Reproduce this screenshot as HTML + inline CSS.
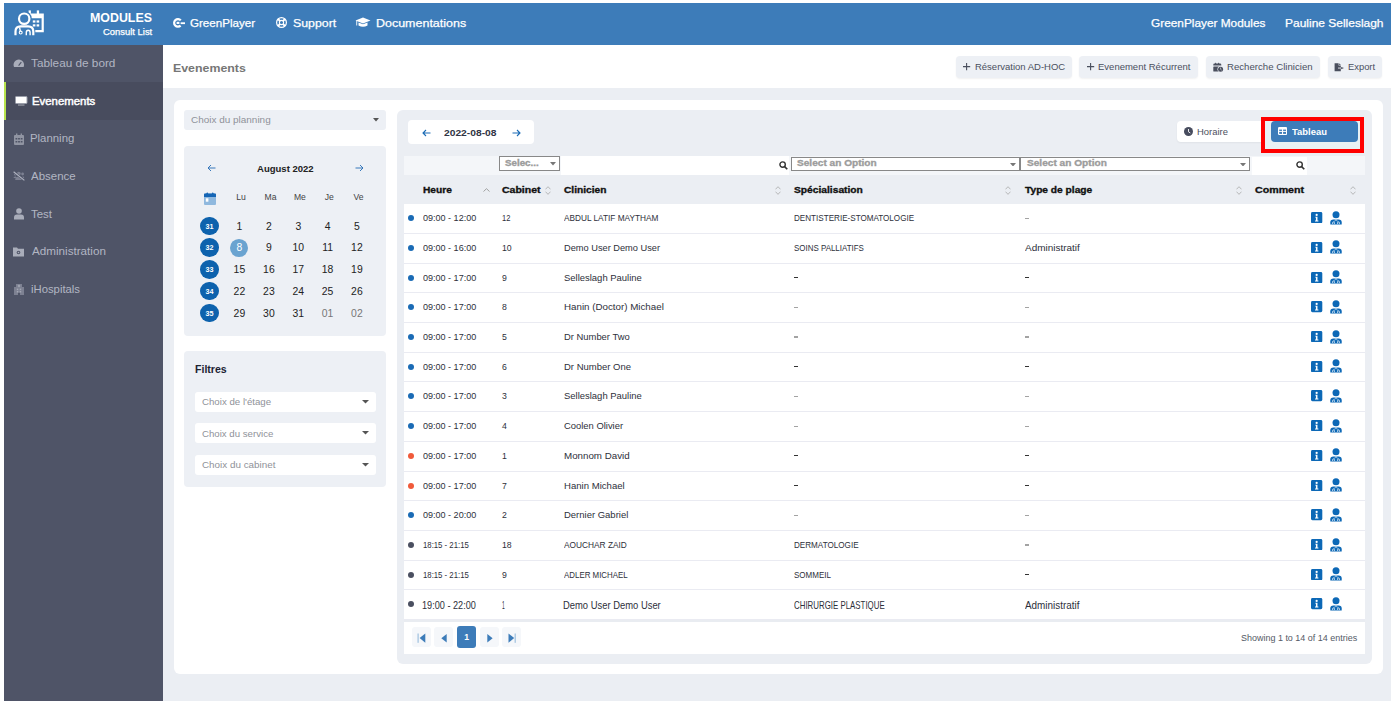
<!DOCTYPE html>
<html><head><meta charset="utf-8">
<style>
*{box-sizing:border-box;margin:0;padding:0}
html,body{width:1395px;height:706px;overflow:hidden;background:#fff;font-family:"Liberation Sans",sans-serif}
.bx{position:absolute}
.tx{position:absolute;white-space:nowrap;line-height:normal;transform-origin:0 0}
.wk{width:18.7px;height:18.7px;border-radius:50%;background:#0d62ad}
</style></head><body>
<div class="bx" style="left:4px;top:3px;width:1387.00px;height:42.00px;background:#3d7cb9;"></div>
<div class="bx" style="left:4px;top:45px;width:159.00px;height:656.00px;background:#4f5467;"></div>
<div class="bx" style="left:163px;top:45px;width:1228.00px;height:43.00px;background:#fff;"></div>
<div class="bx" style="left:163px;top:88px;width:1228.00px;height:613.00px;background:#ebeef3;"></div>
<div class="bx" style="left:174px;top:100px;width:1209.00px;height:574.00px;background:#fff;border-radius:6px;"></div>
<svg class="bx" style="left:0;top:0" width="50" height="45" viewBox="0 0 50 45">
<path d="M29.5 13.6 H43.8 V32.2 H35.3 V29.9 H41.6 V18.2 H29.5 Z" fill="#fff"/>
<rect x="28.6" y="10.4" width="2.3" height="4" fill="#fff"/><rect x="36.8" y="10.4" width="2.3" height="4" fill="#fff"/>
<rect x="32.8" y="20.4" width="2.6" height="2.2" fill="#fff"/><rect x="36.6" y="20.4" width="2.6" height="2.2" fill="#fff"/>
<rect x="32.8" y="24.3" width="2.6" height="2.2" fill="#fff"/><rect x="36.6" y="24.3" width="2.6" height="2.2" fill="#fff"/>
<circle cx="24.2" cy="18.7" r="7.6" fill="#3d7cb9"/>
<circle cx="24.2" cy="18.7" r="5.2" fill="none" stroke="#fff" stroke-width="2.2"/>
<path d="M15.5 35.2 V31.6 Q15.5 26.4 20.7 26.4 H28.1 Q33.3 26.4 33.3 31.6 V35.2" fill="none" stroke="#fff" stroke-width="2.2"/>
<circle cx="20.7" cy="32.6" r="1.45" fill="none" stroke="#fff" stroke-width="1.1"/>
<path d="M20.3 31.1 L19.6 27.3 M26.3 35.2 V32.6 Q26.3 30.2 28.2 30.2 Q30.1 30.2 30.1 32.6 V35.2" fill="none" stroke="#fff" stroke-width="1.4"/>
</svg>
<span id="t0" class="tx" style="left:90.27px;top:10.00px;font-size:13.44px;font-weight:bold;color:#fff;transform:scaleX(0.9212);">MODULES</span>
<span id="t1" class="tx" style="left:103.00px;top:25.70px;font-size:9.45px;font-weight:normal;color:#fff;transform:scaleX(0.9980);-webkit-text-stroke:0.25px currentColor;">Consult List</span>
<svg class="bx" style="left:172px;top:17px" width="14" height="12" viewBox="0 0 14 12">
<path d="M8.8 3.4 A3.8 3.8 0 1 0 8.6 8.6" fill="none" stroke="#fff" stroke-width="2.2"/>
<rect x="4.6" y="4.8" width="2.8" height="2.2" fill="#fff"/><rect x="8.6" y="5.3" width="4.4" height="1.8" fill="#fff"/></svg>
<span id="t2" class="tx" style="left:190.00px;top:16.60px;font-size:11.19px;font-weight:normal;color:#fff;transform:scaleX(1.0349);-webkit-text-stroke:0.25px currentColor;">GreenPlayer</span>
<svg class="bx" style="left:275px;top:16px" width="13" height="13" viewBox="0 0 13 13">
<circle cx="6.5" cy="6.5" r="4.9" fill="none" stroke="#fff" stroke-width="1.2"/>
<circle cx="6.5" cy="6.5" r="2.1" fill="none" stroke="#fff" stroke-width="1.1"/>
<path d="M2.9 2.9 L5 5 M10.1 2.9 L8 5 M2.9 10.1 L5 8 M10.1 10.1 L8 8" stroke="#fff" stroke-width="2"/></svg>
<span id="t3" class="tx" style="left:292.78px;top:16.60px;font-size:11.19px;font-weight:normal;color:#fff;transform:scaleX(1.1026);-webkit-text-stroke:0.25px currentColor;">Support</span>
<svg class="bx" style="left:355px;top:17px" width="16" height="11" viewBox="0 0 16 11">
<path d="M8 0.5 L15.5 3.5 L8 6.5 L0.5 3.5 Z" fill="#fff"/>
<path d="M3.5 5.5 V8.5 Q8 11 12.5 8.5 V5.5 L8 7.3 Z" fill="#fff"/>
<rect x="1.3" y="3.5" width="0.9" height="5" fill="#fff"/></svg>
<span id="t4" class="tx" style="left:375.57px;top:16.60px;font-size:11.19px;font-weight:normal;color:#fff;transform:scaleX(1.1148);-webkit-text-stroke:0.25px currentColor;">Documentations</span>
<span id="t5" class="tx" style="left:1151.00px;top:16.60px;font-size:11.19px;font-weight:normal;color:#fff;transform:scaleX(1.0574);-webkit-text-stroke:0.25px currentColor;">GreenPlayer Modules</span>
<span id="t6" class="tx" style="left:1285.37px;top:16.60px;font-size:11.19px;font-weight:normal;color:#fff;transform:scaleX(1.0703);-webkit-text-stroke:0.25px currentColor;">Pauline Selleslagh</span>
<div class="bx" style="left:4px;top:82px;width:159.00px;height:38.00px;background:#484c5e;"></div>
<div class="bx" style="left:4px;top:82px;width:2.00px;height:38.00px;background:#b7e34c;"></div>
<span id="t7" class="tx" style="left:30.78px;top:57.90px;font-size:10.32px;font-weight:normal;color:#b2b6c3;transform:scaleX(1.1411);">Tableau de bord</span>
<span id="t8" class="tx" style="left:32.17px;top:94.60px;font-size:10.76px;font-weight:normal;color:#fff;transform:scaleX(1.0593);-webkit-text-stroke:0.45px #fff;">Evenements</span>
<span id="t9" class="tx" style="left:30.16px;top:133.30px;font-size:10.47px;font-weight:normal;color:#b2b6c3;transform:scaleX(1.0875);">Planning</span>
<span id="t10" class="tx" style="left:30.58px;top:170.90px;font-size:10.47px;font-weight:normal;color:#b2b6c3;transform:scaleX(1.0950);">Absence</span>
<span id="t11" class="tx" style="left:30.58px;top:208.70px;font-size:10.47px;font-weight:normal;color:#b2b6c3;transform:scaleX(1.0947);">Test</span>
<span id="t12" class="tx" style="left:32.41px;top:246.40px;font-size:10.47px;font-weight:normal;color:#b2b6c3;transform:scaleX(1.1136);">Administration</span>
<span id="t13" class="tx" style="left:30.58px;top:284.10px;font-size:10.47px;font-weight:normal;color:#b2b6c3;transform:scaleX(1.0800);">iHospitals</span>
<svg class="bx" style="left:13px;top:59px" width="12" height="9" viewBox="0 0 12 9">
<path d="M1.05 8 A5.25 5.25 0 1 1 10.55 8 Z" fill="#a9adba"/><path d="M5.6 6.6 L8.3 3.2" stroke="#4f5467" stroke-width="1.1"/></svg>
<svg class="bx" style="left:15px;top:96px" width="13" height="10" viewBox="0 0 13 10">
<rect x="0.5" y="0.5" width="11.5" height="7" rx="0.8" fill="#fff" stroke="#9a9eaa" stroke-width="1"/><rect x="3" y="8.3" width="6.5" height="1.5" fill="#8a8e9a"/></svg>
<svg class="bx" style="left:14px;top:133px" width="10" height="12" viewBox="0 0 10 12">
<rect x="0" y="2" width="10" height="10" rx="1" fill="#9094a2"/><rect x="2" y="0.5" width="1.4" height="2.5" fill="#9094a2"/><rect x="6.6" y="0.5" width="1.4" height="2.5" fill="#9094a2"/>
<g fill="#4f5467"><rect x="1.5" y="5" width="1.8" height="1.5"/><rect x="4.1" y="5" width="1.8" height="1.5"/><rect x="6.7" y="5" width="1.8" height="1.5"/><rect x="1.5" y="8" width="1.8" height="1.5"/><rect x="4.1" y="8" width="1.8" height="1.5"/><rect x="6.7" y="8" width="1.8" height="1.5"/></g></svg>
<svg class="bx" style="left:13px;top:171px" width="12" height="10" viewBox="0 0 12 10">
<circle cx="5.8" cy="2.6" r="1.9" fill="#7d8192"/><circle cx="9.6" cy="3" r="1.4" fill="#7d8192"/><circle cx="2.2" cy="3.2" r="1.2" fill="#7d8192"/>
<path d="M2.2 9 Q2.2 5.6 5.8 5.6 Q9.4 5.6 9.4 9 Z" fill="#7d8192"/><path d="M0.5 7 Q0.5 5.5 2.2 5.5 L3 5.5 L3 7 Z M9.5 5.3 Q11.3 5.3 11.3 7.2 L9.8 7.2 Z" fill="#7d8192"/>
<path d="M0.6 0.8 L11.4 9.4" stroke="#4f5467" stroke-width="2.2"/><path d="M0.6 0.8 L11.4 9.4" stroke="#b0b4c1" stroke-width="1.2"/></svg>
<svg class="bx" style="left:14px;top:208px" width="10" height="12" viewBox="0 0 10 12">
<circle cx="5" cy="3" r="2.8" fill="#a9adba"/><path d="M0 11.5 V9.5 Q0 6.5 3 6.5 H7 Q10 6.5 10 9.5 V11.5 Z" fill="#a9adba"/></svg>
<svg class="bx" style="left:12.5px;top:247px" width="11" height="10" viewBox="0 0 11 10">
<path d="M0 0.5 H4 L5 1.8 H11 V9.5 H0 Z" fill="#a9adba"/><circle cx="5.5" cy="5.5" r="1.8" fill="#4f5467"/><circle cx="5.5" cy="5.5" r="0.8" fill="#a9adba"/></svg>
<svg class="bx" style="left:14px;top:284px" width="10" height="11" viewBox="0 0 10 11">
<rect x="2" y="0" width="6" height="11" fill="#7d8192"/><rect x="0" y="3" width="10" height="8" fill="#7d8192"/>
<g fill="#a3a7b4"><rect x="4.3" y="0.8" width="1.4" height="2.4"/><rect x="3.8" y="1.3" width="2.4" height="1.2"/><rect x="2.8" y="4.6" width="1.5" height="1.5"/><rect x="5.7" y="4.6" width="1.5" height="1.5"/><rect x="2.8" y="7" width="1.5" height="1.5"/><rect x="5.7" y="7" width="1.5" height="1.5"/></g><rect x="4" y="8.8" width="2" height="2.2" fill="#4f5467"/></svg>
<span id="t14" class="tx" style="left:173.32px;top:61.90px;font-size:11.48px;font-weight:bold;color:#767676;transform:scaleX(1.0776);">Evenements</span>
<div class="bx" style="left:956.3px;top:56px;width:115.60px;height:22.00px;background:#edf0f5;border-radius:4px;box-shadow:0 1px 2px rgba(0,0,0,0.06);"></div>
<div class="bx" style="left:1079.4px;top:56px;width:118.80px;height:22.00px;background:#edf0f5;border-radius:4px;box-shadow:0 1px 2px rgba(0,0,0,0.06);"></div>
<div class="bx" style="left:1206.1px;top:56px;width:113.80px;height:22.00px;background:#edf0f5;border-radius:4px;box-shadow:0 1px 2px rgba(0,0,0,0.06);"></div>
<div class="bx" style="left:1327.6px;top:56px;width:54.50px;height:22.00px;background:#edf0f5;border-radius:4px;box-shadow:0 1px 2px rgba(0,0,0,0.06);"></div>
<svg class="bx" style="left:963.4px;top:63px" width="8" height="8" viewBox="0 0 8 8"><path d="M3.6 0 V7.2 M0 3.6 H7.2" stroke="#4a4f5e" stroke-width="1.1"/></svg>
<svg class="bx" style="left:1087px;top:63px" width="8" height="8" viewBox="0 0 8 8"><path d="M3.6 0 V7.2 M0 3.6 H7.2" stroke="#4a4f5e" stroke-width="1.1"/></svg>
<span id="t15" class="tx" style="left:975.20px;top:61.00px;font-size:9.59px;font-weight:normal;color:#4a4f5e;transform:scaleX(0.9900);">Réservation AD-HOC</span>
<span id="t16" class="tx" style="left:1098.39px;top:61.00px;font-size:9.59px;font-weight:normal;color:#4a4f5e;transform:scaleX(0.9925);">Evenement Récurrent</span>
<span id="t17" class="tx" style="left:1227.19px;top:61.20px;font-size:9.59px;font-weight:normal;color:#4a4f5e;transform:scaleX(1.0047);">Recherche Clinicien</span>
<span id="t18" class="tx" style="left:1347.82px;top:61.20px;font-size:9.59px;font-weight:normal;color:#4a4f5e;transform:scaleX(0.9778);">Export</span>
<svg class="bx" style="left:1212.5px;top:61.5px" width="11" height="10" viewBox="0 0 11 10">
<path d="M0.3 3.5 V2.8 Q0.3 1.6 1.5 1.6 H2 L2.6 0.4 L3.3 1.6 H5 L5.6 0.4 L6.3 1.6 H7.1 Q8.3 1.6 8.3 2.8 V3.5 Z" fill="#4a4f5e"/>
<rect x="0.3" y="4.6" width="8" height="4.9" rx="0.5" fill="#4a4f5e"/>
<circle cx="7.6" cy="7.2" r="3.1" fill="#edf0f5"/><circle cx="7.6" cy="7.2" r="2.5" fill="#4a4f5e"/>
<path d="M7.6 5.6 V7.3 L8.7 8.2" stroke="#edf0f5" stroke-width="0.6" fill="none"/></svg>
<svg class="bx" style="left:1334px;top:62.5px" width="11" height="9" viewBox="0 0 11 9">
<path d="M0.6 0.2 H4.6 V2.6 H6.8 V8.3 H0.6 Z" fill="#4a4f5e"/><path d="M5.2 0.2 L6.8 1.9 H5.2 Z" fill="#4a4f5e"/>
<rect x="4" y="4.6" width="2.9" height="0.9" fill="#edf0f5"/><path d="M7.1 3.9 L10 5.05 L7.1 6.2 Z" fill="#4a4f5e"/></svg>
<div class="bx" style="left:184.2px;top:110px;width:201.70px;height:19.50px;background:#edf0f5;border-radius:3px;"></div>
<span id="t19" class="tx" style="left:190.59px;top:114.40px;font-size:9.88px;font-weight:normal;color:#8f9299;transform:scaleX(1.0077);">Choix du planning</span>
<svg class="bx" style="left:373px;top:118px" width="6" height="4" viewBox="0 0 6 4"><path d="M0 0 H6 L3 3.5 Z" fill="#555"/></svg>
<div class="bx" style="left:184px;top:146px;width:202.00px;height:190.00px;background:#edf0f5;border-radius:4px;"></div>
<svg class="bx" style="left:207px;top:164.2px" width="9" height="8" viewBox="0 0 9 8"><path d="M8.5 4 H1 M4 1 L1 4 L4 7" fill="none" stroke="#2f72b7" stroke-width="0.95"/></svg>
<svg class="bx" style="left:354.5px;top:164.2px" width="9" height="8" viewBox="0 0 9 8"><path d="M0.5 4 H8 M5 1 L8 4 L5 7" fill="none" stroke="#2f72b7" stroke-width="0.95"/></svg>
<span id="t20" class="tx" style="left:257.00px;top:163.50px;font-size:9.16px;font-weight:bold;color:#222;transform:scaleX(1.0407);">August 2022</span>
<svg class="bx" style="left:204px;top:192px" width="12" height="13" viewBox="0 0 12 13">
<rect x="0" y="1.4" width="12" height="11.6" rx="1" fill="#8fb8de"/><path d="M0 5 V2.4 Q0 1.4 1 1.4 H2.2 L3.2 0.2 L4.2 1.4 H7.8 L8.8 0.2 L9.8 1.4 H11 Q12 1.4 12 2.4 V5 Z" fill="#1565b5"/>
<rect x="1.8" y="6.3" width="2.6" height="3.4" fill="#fff"/></svg>
<span id="t21" class="tx" style="left:191.00px;width:100px;text-align:center;top:192.20px;font-size:8.60px;font-weight:normal;color:#444;transform:scaleX(1.0000);">Lu</span>
<span id="t22" class="tx" style="left:220.50px;width:100px;text-align:center;top:192.20px;font-size:8.60px;font-weight:normal;color:#444;transform:scaleX(1.0000);">Ma</span>
<span id="t23" class="tx" style="left:249.90px;width:100px;text-align:center;top:192.20px;font-size:8.60px;font-weight:normal;color:#444;transform:scaleX(1.0000);">Me</span>
<span id="t24" class="tx" style="left:279.20px;width:100px;text-align:center;top:192.20px;font-size:8.60px;font-weight:normal;color:#444;transform:scaleX(1.0000);">Je</span>
<span id="t25" class="tx" style="left:308.50px;width:100px;text-align:center;top:192.20px;font-size:8.60px;font-weight:normal;color:#444;transform:scaleX(1.0000);">Ve</span>
<div class="bx wk" style="left:200.15px;top:216.55px"></div>
<span id="t26" class="tx" style="left:159.50px;width:100px;text-align:center;top:221.50px;font-size:7.20px;font-weight:bold;color:#fff;transform:scaleX(1.0000);">31</span>
<span id="t27" class="tx" style="left:189.40px;width:100px;text-align:center;top:220.50px;font-size:10.40px;font-weight:normal;color:#222;transform:scaleX(1.0000);">1</span>
<span id="t28" class="tx" style="left:218.90px;width:100px;text-align:center;top:220.50px;font-size:10.40px;font-weight:normal;color:#222;transform:scaleX(1.0000);">2</span>
<span id="t29" class="tx" style="left:248.30px;width:100px;text-align:center;top:220.50px;font-size:10.40px;font-weight:normal;color:#222;transform:scaleX(1.0000);">3</span>
<span id="t30" class="tx" style="left:277.60px;width:100px;text-align:center;top:220.50px;font-size:10.40px;font-weight:normal;color:#222;transform:scaleX(1.0000);">4</span>
<span id="t31" class="tx" style="left:306.90px;width:100px;text-align:center;top:220.50px;font-size:10.40px;font-weight:normal;color:#222;transform:scaleX(1.0000);">5</span>
<div class="bx wk" style="left:200.15px;top:238.30px"></div>
<span id="t32" class="tx" style="left:159.50px;width:100px;text-align:center;top:243.25px;font-size:7.20px;font-weight:bold;color:#fff;transform:scaleX(1.0000);">32</span>
<div class="bx" style="left:230.10px;top:238.75px;width:17.8px;height:17.8px;border-radius:50%;background:#6aa3d0"></div>
<span id="t33" class="tx" style="left:189.40px;width:100px;text-align:center;top:242.25px;font-size:10.40px;font-weight:normal;color:#fff;transform:scaleX(1.0000);">8</span>
<span id="t34" class="tx" style="left:218.90px;width:100px;text-align:center;top:242.25px;font-size:10.40px;font-weight:normal;color:#222;transform:scaleX(1.0000);">9</span>
<span id="t35" class="tx" style="left:248.30px;width:100px;text-align:center;top:242.25px;font-size:10.40px;font-weight:normal;color:#222;transform:scaleX(1.0000);">10</span>
<span id="t36" class="tx" style="left:277.60px;width:100px;text-align:center;top:242.25px;font-size:10.40px;font-weight:normal;color:#222;transform:scaleX(1.0000);">11</span>
<span id="t37" class="tx" style="left:306.90px;width:100px;text-align:center;top:242.25px;font-size:10.40px;font-weight:normal;color:#222;transform:scaleX(1.0000);">12</span>
<div class="bx wk" style="left:200.15px;top:260.05px"></div>
<span id="t38" class="tx" style="left:159.50px;width:100px;text-align:center;top:265.00px;font-size:7.20px;font-weight:bold;color:#fff;transform:scaleX(1.0000);">33</span>
<span id="t39" class="tx" style="left:189.40px;width:100px;text-align:center;top:264.00px;font-size:10.40px;font-weight:normal;color:#222;transform:scaleX(1.0000);">15</span>
<span id="t40" class="tx" style="left:218.90px;width:100px;text-align:center;top:264.00px;font-size:10.40px;font-weight:normal;color:#222;transform:scaleX(1.0000);">16</span>
<span id="t41" class="tx" style="left:248.30px;width:100px;text-align:center;top:264.00px;font-size:10.40px;font-weight:normal;color:#222;transform:scaleX(1.0000);">17</span>
<span id="t42" class="tx" style="left:277.60px;width:100px;text-align:center;top:264.00px;font-size:10.40px;font-weight:normal;color:#222;transform:scaleX(1.0000);">18</span>
<span id="t43" class="tx" style="left:306.90px;width:100px;text-align:center;top:264.00px;font-size:10.40px;font-weight:normal;color:#222;transform:scaleX(1.0000);">19</span>
<div class="bx wk" style="left:200.15px;top:281.80px"></div>
<span id="t44" class="tx" style="left:159.50px;width:100px;text-align:center;top:286.75px;font-size:7.20px;font-weight:bold;color:#fff;transform:scaleX(1.0000);">34</span>
<span id="t45" class="tx" style="left:189.40px;width:100px;text-align:center;top:285.75px;font-size:10.40px;font-weight:normal;color:#222;transform:scaleX(1.0000);">22</span>
<span id="t46" class="tx" style="left:218.90px;width:100px;text-align:center;top:285.75px;font-size:10.40px;font-weight:normal;color:#222;transform:scaleX(1.0000);">23</span>
<span id="t47" class="tx" style="left:248.30px;width:100px;text-align:center;top:285.75px;font-size:10.40px;font-weight:normal;color:#222;transform:scaleX(1.0000);">24</span>
<span id="t48" class="tx" style="left:277.60px;width:100px;text-align:center;top:285.75px;font-size:10.40px;font-weight:normal;color:#222;transform:scaleX(1.0000);">25</span>
<span id="t49" class="tx" style="left:306.90px;width:100px;text-align:center;top:285.75px;font-size:10.40px;font-weight:normal;color:#222;transform:scaleX(1.0000);">26</span>
<div class="bx wk" style="left:200.15px;top:303.55px"></div>
<span id="t50" class="tx" style="left:159.50px;width:100px;text-align:center;top:308.50px;font-size:7.20px;font-weight:bold;color:#fff;transform:scaleX(1.0000);">35</span>
<span id="t51" class="tx" style="left:189.40px;width:100px;text-align:center;top:307.50px;font-size:10.40px;font-weight:normal;color:#222;transform:scaleX(1.0000);">29</span>
<span id="t52" class="tx" style="left:218.90px;width:100px;text-align:center;top:307.50px;font-size:10.40px;font-weight:normal;color:#222;transform:scaleX(1.0000);">30</span>
<span id="t53" class="tx" style="left:248.30px;width:100px;text-align:center;top:307.50px;font-size:10.40px;font-weight:normal;color:#222;transform:scaleX(1.0000);">31</span>
<span id="t54" class="tx" style="left:277.60px;width:100px;text-align:center;top:307.50px;font-size:10.40px;font-weight:normal;color:#777;transform:scaleX(1.0000);">01</span>
<span id="t55" class="tx" style="left:306.90px;width:100px;text-align:center;top:307.50px;font-size:10.40px;font-weight:normal;color:#777;transform:scaleX(1.0000);">02</span>
<div class="bx" style="left:184px;top:351px;width:202.30px;height:135.50px;background:#edf0f5;border-radius:4px;"></div>
<span id="t56" class="tx" style="left:195.00px;top:362.90px;font-size:11.05px;font-weight:bold;color:#1c2333;transform:scaleX(0.9576);">Filtres</span>
<div class="bx" style="left:195px;top:391.6px;width:181.00px;height:20.00px;background:#fff;border-radius:3px;"></div>
<span id="t57" class="tx" style="left:201.99px;top:395.90px;font-size:9.45px;font-weight:normal;color:#8f9299;transform:scaleX(1.0254);">Choix de l'étage</span>
<svg class="bx" style="left:362px;top:399.60px" width="7" height="4" viewBox="0 0 7 4"><path d="M0 0 H7 L3.5 3.6 Z" fill="#555"/></svg>
<div class="bx" style="left:195px;top:423.20000000000005px;width:181.00px;height:20.00px;background:#fff;border-radius:3px;"></div>
<span id="t58" class="tx" style="left:201.99px;top:427.50px;font-size:9.45px;font-weight:normal;color:#8f9299;transform:scaleX(1.0232);">Choix du service</span>
<svg class="bx" style="left:362px;top:431.20px" width="7" height="4" viewBox="0 0 7 4"><path d="M0 0 H7 L3.5 3.6 Z" fill="#555"/></svg>
<div class="bx" style="left:195px;top:454.8px;width:181.00px;height:20.00px;background:#fff;border-radius:3px;"></div>
<span id="t59" class="tx" style="left:201.98px;top:459.10px;font-size:9.45px;font-weight:normal;color:#8f9299;transform:scaleX(1.0443);">Choix du cabinet</span>
<svg class="bx" style="left:362px;top:462.80px" width="7" height="4" viewBox="0 0 7 4"><path d="M0 0 H7 L3.5 3.6 Z" fill="#555"/></svg>
<div class="bx" style="left:397px;top:110px;width:974.90px;height:553.50px;background:#ebeef3;border-radius:6px;"></div>
<div class="bx" style="left:408px;top:119.8px;width:125.70px;height:24.30px;background:#fff;border-radius:4px;"></div>
<svg class="bx" style="left:421.5px;top:128.5px" width="9" height="8" viewBox="0 0 9 8"><path d="M8.5 4 H1 M4 1 L1 4 L4 7" fill="none" stroke="#1a6bb5" stroke-width="1.1"/></svg>
<svg class="bx" style="left:511.8px;top:128.5px" width="9" height="8" viewBox="0 0 9 8"><path d="M0.5 4 H8 M5 1 L8 4 L5 7" fill="none" stroke="#1a6bb5" stroke-width="1.1"/></svg>
<span id="t60" class="tx" style="left:444.16px;top:127.10px;font-size:9.45px;font-weight:bold;color:#2f3444;transform:scaleX(1.0875);">2022-08-08</span>
<div class="bx" style="left:1177.2px;top:120.9px;width:112.80px;height:21.50px;background:#fff;border-radius:4px;box-shadow:0 1px 2px rgba(0,0,0,0.05);"></div>
<svg class="bx" style="left:1184px;top:127px" width="9" height="9" viewBox="0 0 9 9"><circle cx="4.5" cy="4.5" r="4.5" fill="#474c5e"/><path d="M4.5 2 V4.8 L6.3 6" fill="none" stroke="#fff" stroke-width="0.9"/></svg>
<span id="t61" class="tx" style="left:1197.37px;top:126.70px;font-size:9.01px;font-weight:normal;color:#4d5160;transform:scaleX(1.0483);">Horaire</span>
<div class="bx" style="left:1261px;top:117px;width:103.30px;height:35.90px;background:#e9f1f4;"></div>
<div class="bx" style="left:1271.1px;top:120.9px;width:86.70px;height:21.50px;background:#3d7cb9;border-radius:4px;"></div>
<svg class="bx" style="left:1277.9px;top:127px" width="9.2" height="8" viewBox="0 0 9.2 8"><rect x="0" y="0" width="9.2" height="8" rx="1.2" fill="#fff"/><g fill="#3d7cb9"><rect x="1.2" y="2.6" width="2.8" height="1.3"/><rect x="5.1" y="2.6" width="2.9" height="1.3"/><rect x="1.2" y="4.9" width="2.8" height="2"/><rect x="5.1" y="4.9" width="2.9" height="2"/></g></svg>
<span id="t62" class="tx" style="left:1292.18px;top:125.70px;font-size:9.59px;font-weight:bold;color:#fff;transform:scaleX(0.9833);">Tableau</span>
<div class="bx" style="left:1261px;top:117px;width:103.3px;height:35.9px;border:4px solid #ff0000;box-sizing:border-box"></div>
<div class="bx" style="left:404.3px;top:156px;width:960.40px;height:19.00px;background:#f4f6f9;"></div>
<div class="bx" style="left:561px;top:156px;width:228.00px;height:19.00px;background:#fff;"></div>
<div class="bx" style="left:1252.4px;top:156.5px;width:54.20px;height:18.00px;background:#fff;"></div>
<div class="bx" style="left:499.1px;top:156.1px;width:60.8px;height:14.5px;border:1px solid #888;background:#fff"></div>
<span id="t63" class="tx" style="left:504.57px;top:158.10px;font-size:8.58px;font-weight:bold;color:#9c9c9c;transform:scaleX(1.1379);-webkit-text-stroke:0.35px currentColor;">Selec...</span>
<svg class="bx" style="left:549.5px;top:162px" width="6" height="3.5" viewBox="0 0 6 3.5"><path d="M0 0 H6 L3 3.5 Z" fill="#777"/></svg>
<div class="bx" style="left:790.5px;top:156.5px;width:229.70px;height:14.4px;border:1px solid #888;background:#fff"></div>
<span id="t64" class="tx" style="left:797.00px;top:156.80px;font-size:9.59px;font-weight:bold;color:#9c9c9c;transform:scaleX(1.0547);-webkit-text-stroke:0.35px currentColor;">Select an Option</span>
<svg class="bx" style="left:1009.70px;top:162.5px" width="6" height="3.5" viewBox="0 0 6 3.5"><path d="M0 0 H6 L3 3.5 Z" fill="#777"/></svg>
<div class="bx" style="left:1020.2px;top:156.5px;width:230.20px;height:14.4px;border:1px solid #888;background:#fff"></div>
<span id="t65" class="tx" style="left:1026.76px;top:156.80px;font-size:9.59px;font-weight:bold;color:#9c9c9c;transform:scaleX(1.0560);-webkit-text-stroke:0.35px currentColor;">Select an Option</span>
<svg class="bx" style="left:1239.90px;top:162.5px" width="6" height="3.5" viewBox="0 0 6 3.5"><path d="M0 0 H6 L3 3.5 Z" fill="#777"/></svg>
<svg class="bx" style="left:778.5px;top:161.3px" width="9" height="9" viewBox="0 0 9 9"><circle cx="3.6" cy="3.6" r="2.7" fill="none" stroke="#333" stroke-width="1.4"/><path d="M5.6 5.6 L8.3 8.3" stroke="#333" stroke-width="1.6"/></svg>
<svg class="bx" style="left:1295.5px;top:161.3px" width="9" height="9" viewBox="0 0 9 9"><circle cx="3.6" cy="3.6" r="2.7" fill="none" stroke="#333" stroke-width="1.4"/><path d="M5.6 5.6 L8.3 8.3" stroke="#333" stroke-width="1.6"/></svg>
<span id="t66" class="tx" style="left:423.20px;top:183.60px;font-size:9.88px;font-weight:bold;color:#111;transform:scaleX(1.0321);-webkit-text-stroke:0.35px currentColor;">Heure</span>
<span id="t67" class="tx" style="left:502.00px;top:183.50px;font-size:9.45px;font-weight:bold;color:#111;transform:scaleX(1.1143);-webkit-text-stroke:0.35px currentColor;">Cabinet</span>
<span id="t68" class="tx" style="left:564.00px;top:183.50px;font-size:9.45px;font-weight:bold;color:#111;transform:scaleX(1.0795);-webkit-text-stroke:0.35px currentColor;">Clinicien</span>
<span id="t69" class="tx" style="left:793.77px;top:183.60px;font-size:9.88px;font-weight:bold;color:#111;transform:scaleX(1.0364);-webkit-text-stroke:0.35px currentColor;">Spécialisation</span>
<span id="t70" class="tx" style="left:1024.59px;top:183.60px;font-size:9.88px;font-weight:bold;color:#111;transform:scaleX(1.0323);-webkit-text-stroke:0.35px currentColor;">Type de plage</span>
<span id="t71" class="tx" style="left:1254.96px;top:183.60px;font-size:9.88px;font-weight:bold;color:#111;transform:scaleX(1.0778);-webkit-text-stroke:0.35px currentColor;">Comment</span>
<svg class="bx" style="left:482.5px;top:187.5px" width="7" height="4" viewBox="0 0 7 4"><path d="M0.5 3.5 L3.5 0.7 L6.5 3.5" fill="none" stroke="#999" stroke-width="0.9"/></svg>
<svg class="bx" style="left:544.8px;top:185.5px" width="6" height="9" viewBox="0 0 6 9"><path d="M0.5 3.3 L3 0.7 L5.5 3.3 M0.5 5.7 L3 8.3 L5.5 5.7" fill="none" stroke="#aaa" stroke-width="0.8"/></svg>
<svg class="bx" style="left:774.6px;top:185.5px" width="6" height="9" viewBox="0 0 6 9"><path d="M0.5 3.3 L3 0.7 L5.5 3.3 M0.5 5.7 L3 8.3 L5.5 5.7" fill="none" stroke="#aaa" stroke-width="0.8"/></svg>
<svg class="bx" style="left:1004.7px;top:185.5px" width="6" height="9" viewBox="0 0 6 9"><path d="M0.5 3.3 L3 0.7 L5.5 3.3 M0.5 5.7 L3 8.3 L5.5 5.7" fill="none" stroke="#aaa" stroke-width="0.8"/></svg>
<svg class="bx" style="left:1235.6px;top:185.5px" width="6" height="9" viewBox="0 0 6 9"><path d="M0.5 3.3 L3 0.7 L5.5 3.3 M0.5 5.7 L3 8.3 L5.5 5.7" fill="none" stroke="#aaa" stroke-width="0.8"/></svg>
<svg class="bx" style="left:1350px;top:185.5px" width="6" height="9" viewBox="0 0 6 9"><path d="M0.5 3.3 L3 0.7 L5.5 3.3 M0.5 5.7 L3 8.3 L5.5 5.7" fill="none" stroke="#aaa" stroke-width="0.8"/></svg>
<div class="bx" style="left:404.3px;top:204.2px;width:960.40px;height:29.71px;background:#fff;border-bottom:1px solid #eaebf2;box-sizing:border-box;"></div>
<div class="bx" style="left:408px;top:215.20px;width:6px;height:6px;border-radius:50%;background:#1a6bb5"></div>
<span id="t72" class="tx" style="left:423.20px;top:213.20px;font-size:8.70px;font-weight:normal;color:#2d2f3a;transform:scaleX(1.0392);">09:00 - 12:00</span>
<span id="t73" class="tx" style="left:502.00px;top:213.20px;font-size:8.70px;font-weight:normal;color:#2d2f3a;transform:scaleX(0.8667);">12</span>
<span id="t74" class="tx" style="left:564.19px;top:213.20px;font-size:8.70px;font-weight:normal;color:#2d2f3a;transform:scaleX(0.9505);">ABDUL LATIF MAYTHAM</span>
<span id="t75" class="tx" style="left:794.03px;top:213.20px;font-size:8.70px;font-weight:normal;color:#2d2f3a;transform:scaleX(0.9320);">DENTISTERIE-STOMATOLOGIE</span>
<div class="bx" style="left:1024.6px;top:217.6px;width:4.00px;height:1.20px;background:#a3a3a3;"></div>
<svg class="bx" style="left:1311.4px;top:212.20px" width="11.3" height="11.3" viewBox="0 0 11 11"><rect x="0" y="0" width="11" height="11" rx="1.4" fill="#0c68b6"/><circle cx="5.5" cy="2.9" r="1.1" fill="#fff"/><path d="M4.3 4.6 H6.3 V8.3 H7.2 V9.3 H3.9 V8.3 H4.8 V5.5 H4.3 Z" fill="#fff"/></svg>
<svg class="bx" style="left:1329.5px;top:210.70px" width="12" height="14" viewBox="0 0 12 14"><circle cx="6" cy="3.8" r="3.5" fill="#0c68b6"/><path d="M0.3 13.6 V11.2 Q0.3 8.4 3.4 8.4 H8.6 Q11.7 8.4 11.7 11.2 V13.6 Z" fill="#0c68b6"/><path d="M6 8.4 L4.5 10.6 M6 8.4 L7.5 10.6" stroke="#fff" stroke-width="0.6" fill="none"/><path d="M2.6 13 V12 Q2.6 10.8 3.5 10.8 Q4.4 10.8 4.4 12 V13 M7.6 13 V12 Q7.6 10.8 8.5 10.8 Q9.4 10.8 9.4 12 V13" fill="none" stroke="#fff" stroke-width="0.7"/></svg>
<div class="bx" style="left:404.3px;top:233.91px;width:960.40px;height:29.71px;background:#fff;border-bottom:1px solid #eaebf2;box-sizing:border-box;"></div>
<div class="bx" style="left:408px;top:244.91px;width:6px;height:6px;border-radius:50%;background:#1a6bb5"></div>
<span id="t76" class="tx" style="left:423.20px;top:242.91px;font-size:8.70px;font-weight:normal;color:#2d2f3a;transform:scaleX(1.0392);">09:00 - 16:00</span>
<span id="t77" class="tx" style="left:502.00px;top:242.91px;font-size:8.70px;font-weight:normal;color:#2d2f3a;transform:scaleX(1.0000);">10</span>
<span id="t78" class="tx" style="left:564.20px;top:242.91px;font-size:8.70px;font-weight:normal;color:#2d2f3a;transform:scaleX(1.0637);">Demo User Demo User</span>
<span id="t79" class="tx" style="left:794.04px;top:242.91px;font-size:8.70px;font-weight:normal;color:#2d2f3a;transform:scaleX(0.9145);">SOINS PALLIATIFS</span>
<span id="t80" class="tx" style="left:1024.57px;top:242.91px;font-size:8.70px;font-weight:normal;color:#2d2f3a;transform:scaleX(1.1458);">Administratif</span>
<svg class="bx" style="left:1311.4px;top:241.91px" width="11.3" height="11.3" viewBox="0 0 11 11"><rect x="0" y="0" width="11" height="11" rx="1.4" fill="#0c68b6"/><circle cx="5.5" cy="2.9" r="1.1" fill="#fff"/><path d="M4.3 4.6 H6.3 V8.3 H7.2 V9.3 H3.9 V8.3 H4.8 V5.5 H4.3 Z" fill="#fff"/></svg>
<svg class="bx" style="left:1329.5px;top:240.41px" width="12" height="14" viewBox="0 0 12 14"><circle cx="6" cy="3.8" r="3.5" fill="#0c68b6"/><path d="M0.3 13.6 V11.2 Q0.3 8.4 3.4 8.4 H8.6 Q11.7 8.4 11.7 11.2 V13.6 Z" fill="#0c68b6"/><path d="M6 8.4 L4.5 10.6 M6 8.4 L7.5 10.6" stroke="#fff" stroke-width="0.6" fill="none"/><path d="M2.6 13 V12 Q2.6 10.8 3.5 10.8 Q4.4 10.8 4.4 12 V13 M7.6 13 V12 Q7.6 10.8 8.5 10.8 Q9.4 10.8 9.4 12 V13" fill="none" stroke="#fff" stroke-width="0.7"/></svg>
<div class="bx" style="left:404.3px;top:263.62px;width:960.40px;height:29.71px;background:#fff;border-bottom:1px solid #eaebf2;box-sizing:border-box;"></div>
<div class="bx" style="left:408px;top:274.62px;width:6px;height:6px;border-radius:50%;background:#1a6bb5"></div>
<span id="t81" class="tx" style="left:423.20px;top:272.62px;font-size:8.70px;font-weight:normal;color:#2d2f3a;transform:scaleX(1.0392);">09:00 - 17:00</span>
<span id="t82" class="tx" style="left:502.00px;top:272.62px;font-size:8.70px;font-weight:normal;color:#2d2f3a;transform:scaleX(1.0000);">9</span>
<span id="t83" class="tx" style="left:564.20px;top:272.62px;font-size:8.70px;font-weight:normal;color:#2d2f3a;transform:scaleX(1.0887);">Selleslagh Pauline</span>
<div class="bx" style="left:794.3px;top:277.02px;width:4.00px;height:1.20px;background:#333;"></div>
<div class="bx" style="left:1024.6px;top:277.02px;width:4.00px;height:1.20px;background:#333;"></div>
<svg class="bx" style="left:1311.4px;top:271.62px" width="11.3" height="11.3" viewBox="0 0 11 11"><rect x="0" y="0" width="11" height="11" rx="1.4" fill="#0c68b6"/><circle cx="5.5" cy="2.9" r="1.1" fill="#fff"/><path d="M4.3 4.6 H6.3 V8.3 H7.2 V9.3 H3.9 V8.3 H4.8 V5.5 H4.3 Z" fill="#fff"/></svg>
<svg class="bx" style="left:1329.5px;top:270.12px" width="12" height="14" viewBox="0 0 12 14"><circle cx="6" cy="3.8" r="3.5" fill="#0c68b6"/><path d="M0.3 13.6 V11.2 Q0.3 8.4 3.4 8.4 H8.6 Q11.7 8.4 11.7 11.2 V13.6 Z" fill="#0c68b6"/><path d="M6 8.4 L4.5 10.6 M6 8.4 L7.5 10.6" stroke="#fff" stroke-width="0.6" fill="none"/><path d="M2.6 13 V12 Q2.6 10.8 3.5 10.8 Q4.4 10.8 4.4 12 V13 M7.6 13 V12 Q7.6 10.8 8.5 10.8 Q9.4 10.8 9.4 12 V13" fill="none" stroke="#fff" stroke-width="0.7"/></svg>
<div class="bx" style="left:404.3px;top:293.33px;width:960.40px;height:29.71px;background:#fff;border-bottom:1px solid #eaebf2;box-sizing:border-box;"></div>
<div class="bx" style="left:408px;top:304.33px;width:6px;height:6px;border-radius:50%;background:#1a6bb5"></div>
<span id="t84" class="tx" style="left:423.20px;top:302.33px;font-size:8.70px;font-weight:normal;color:#2d2f3a;transform:scaleX(1.0392);">09:00 - 17:00</span>
<span id="t85" class="tx" style="left:502.00px;top:302.33px;font-size:8.70px;font-weight:normal;color:#2d2f3a;transform:scaleX(1.0000);">8</span>
<span id="t86" class="tx" style="left:564.21px;top:302.33px;font-size:8.70px;font-weight:normal;color:#2d2f3a;transform:scaleX(1.1236);">Hanin (Doctor) Michael</span>
<div class="bx" style="left:794.3px;top:306.72999999999996px;width:4.00px;height:1.20px;background:#a3a3a3;"></div>
<div class="bx" style="left:1024.6px;top:306.72999999999996px;width:4.00px;height:1.20px;background:#a3a3a3;"></div>
<svg class="bx" style="left:1311.4px;top:301.33px" width="11.3" height="11.3" viewBox="0 0 11 11"><rect x="0" y="0" width="11" height="11" rx="1.4" fill="#0c68b6"/><circle cx="5.5" cy="2.9" r="1.1" fill="#fff"/><path d="M4.3 4.6 H6.3 V8.3 H7.2 V9.3 H3.9 V8.3 H4.8 V5.5 H4.3 Z" fill="#fff"/></svg>
<svg class="bx" style="left:1329.5px;top:299.83px" width="12" height="14" viewBox="0 0 12 14"><circle cx="6" cy="3.8" r="3.5" fill="#0c68b6"/><path d="M0.3 13.6 V11.2 Q0.3 8.4 3.4 8.4 H8.6 Q11.7 8.4 11.7 11.2 V13.6 Z" fill="#0c68b6"/><path d="M6 8.4 L4.5 10.6 M6 8.4 L7.5 10.6" stroke="#fff" stroke-width="0.6" fill="none"/><path d="M2.6 13 V12 Q2.6 10.8 3.5 10.8 Q4.4 10.8 4.4 12 V13 M7.6 13 V12 Q7.6 10.8 8.5 10.8 Q9.4 10.8 9.4 12 V13" fill="none" stroke="#fff" stroke-width="0.7"/></svg>
<div class="bx" style="left:404.3px;top:323.03999999999996px;width:960.40px;height:29.71px;background:#fff;border-bottom:1px solid #eaebf2;box-sizing:border-box;"></div>
<div class="bx" style="left:408px;top:334.04px;width:6px;height:6px;border-radius:50%;background:#1a6bb5"></div>
<span id="t87" class="tx" style="left:423.20px;top:332.04px;font-size:8.70px;font-weight:normal;color:#2d2f3a;transform:scaleX(1.0392);">09:00 - 17:00</span>
<span id="t88" class="tx" style="left:502.00px;top:332.04px;font-size:8.70px;font-weight:normal;color:#2d2f3a;transform:scaleX(1.0000);">5</span>
<span id="t89" class="tx" style="left:564.20px;top:332.04px;font-size:8.70px;font-weight:normal;color:#2d2f3a;transform:scaleX(1.0820);">Dr Number Two</span>
<div class="bx" style="left:794.3px;top:336.43999999999994px;width:4.00px;height:1.20px;background:#a3a3a3;"></div>
<div class="bx" style="left:1024.6px;top:336.43999999999994px;width:4.00px;height:1.20px;background:#a3a3a3;"></div>
<svg class="bx" style="left:1311.4px;top:331.04px" width="11.3" height="11.3" viewBox="0 0 11 11"><rect x="0" y="0" width="11" height="11" rx="1.4" fill="#0c68b6"/><circle cx="5.5" cy="2.9" r="1.1" fill="#fff"/><path d="M4.3 4.6 H6.3 V8.3 H7.2 V9.3 H3.9 V8.3 H4.8 V5.5 H4.3 Z" fill="#fff"/></svg>
<svg class="bx" style="left:1329.5px;top:329.54px" width="12" height="14" viewBox="0 0 12 14"><circle cx="6" cy="3.8" r="3.5" fill="#0c68b6"/><path d="M0.3 13.6 V11.2 Q0.3 8.4 3.4 8.4 H8.6 Q11.7 8.4 11.7 11.2 V13.6 Z" fill="#0c68b6"/><path d="M6 8.4 L4.5 10.6 M6 8.4 L7.5 10.6" stroke="#fff" stroke-width="0.6" fill="none"/><path d="M2.6 13 V12 Q2.6 10.8 3.5 10.8 Q4.4 10.8 4.4 12 V13 M7.6 13 V12 Q7.6 10.8 8.5 10.8 Q9.4 10.8 9.4 12 V13" fill="none" stroke="#fff" stroke-width="0.7"/></svg>
<div class="bx" style="left:404.3px;top:352.75px;width:960.40px;height:29.71px;background:#fff;border-bottom:1px solid #eaebf2;box-sizing:border-box;"></div>
<div class="bx" style="left:408px;top:363.75px;width:6px;height:6px;border-radius:50%;background:#1a6bb5"></div>
<span id="t90" class="tx" style="left:423.20px;top:361.75px;font-size:8.70px;font-weight:normal;color:#2d2f3a;transform:scaleX(1.0392);">09:00 - 17:00</span>
<span id="t91" class="tx" style="left:502.00px;top:361.75px;font-size:8.70px;font-weight:normal;color:#2d2f3a;transform:scaleX(1.0000);">6</span>
<span id="t92" class="tx" style="left:564.20px;top:361.75px;font-size:8.70px;font-weight:normal;color:#2d2f3a;transform:scaleX(1.0918);">Dr Number One</span>
<div class="bx" style="left:794.3px;top:366.15px;width:4.00px;height:1.20px;background:#333;"></div>
<div class="bx" style="left:1024.6px;top:366.15px;width:4.00px;height:1.20px;background:#333;"></div>
<svg class="bx" style="left:1311.4px;top:360.75px" width="11.3" height="11.3" viewBox="0 0 11 11"><rect x="0" y="0" width="11" height="11" rx="1.4" fill="#0c68b6"/><circle cx="5.5" cy="2.9" r="1.1" fill="#fff"/><path d="M4.3 4.6 H6.3 V8.3 H7.2 V9.3 H3.9 V8.3 H4.8 V5.5 H4.3 Z" fill="#fff"/></svg>
<svg class="bx" style="left:1329.5px;top:359.25px" width="12" height="14" viewBox="0 0 12 14"><circle cx="6" cy="3.8" r="3.5" fill="#0c68b6"/><path d="M0.3 13.6 V11.2 Q0.3 8.4 3.4 8.4 H8.6 Q11.7 8.4 11.7 11.2 V13.6 Z" fill="#0c68b6"/><path d="M6 8.4 L4.5 10.6 M6 8.4 L7.5 10.6" stroke="#fff" stroke-width="0.6" fill="none"/><path d="M2.6 13 V12 Q2.6 10.8 3.5 10.8 Q4.4 10.8 4.4 12 V13 M7.6 13 V12 Q7.6 10.8 8.5 10.8 Q9.4 10.8 9.4 12 V13" fill="none" stroke="#fff" stroke-width="0.7"/></svg>
<div class="bx" style="left:404.3px;top:382.46px;width:960.40px;height:29.71px;background:#fff;border-bottom:1px solid #eaebf2;box-sizing:border-box;"></div>
<div class="bx" style="left:408px;top:393.46px;width:6px;height:6px;border-radius:50%;background:#1a6bb5"></div>
<span id="t93" class="tx" style="left:423.20px;top:391.46px;font-size:8.70px;font-weight:normal;color:#2d2f3a;transform:scaleX(1.0392);">09:00 - 17:00</span>
<span id="t94" class="tx" style="left:502.00px;top:391.46px;font-size:8.70px;font-weight:normal;color:#2d2f3a;transform:scaleX(1.0000);">3</span>
<span id="t95" class="tx" style="left:564.20px;top:391.46px;font-size:8.70px;font-weight:normal;color:#2d2f3a;transform:scaleX(1.0887);">Selleslagh Pauline</span>
<div class="bx" style="left:794.3px;top:395.85999999999996px;width:4.00px;height:1.20px;background:#a3a3a3;"></div>
<div class="bx" style="left:1024.6px;top:395.85999999999996px;width:4.00px;height:1.20px;background:#a3a3a3;"></div>
<svg class="bx" style="left:1311.4px;top:390.46px" width="11.3" height="11.3" viewBox="0 0 11 11"><rect x="0" y="0" width="11" height="11" rx="1.4" fill="#0c68b6"/><circle cx="5.5" cy="2.9" r="1.1" fill="#fff"/><path d="M4.3 4.6 H6.3 V8.3 H7.2 V9.3 H3.9 V8.3 H4.8 V5.5 H4.3 Z" fill="#fff"/></svg>
<svg class="bx" style="left:1329.5px;top:388.96px" width="12" height="14" viewBox="0 0 12 14"><circle cx="6" cy="3.8" r="3.5" fill="#0c68b6"/><path d="M0.3 13.6 V11.2 Q0.3 8.4 3.4 8.4 H8.6 Q11.7 8.4 11.7 11.2 V13.6 Z" fill="#0c68b6"/><path d="M6 8.4 L4.5 10.6 M6 8.4 L7.5 10.6" stroke="#fff" stroke-width="0.6" fill="none"/><path d="M2.6 13 V12 Q2.6 10.8 3.5 10.8 Q4.4 10.8 4.4 12 V13 M7.6 13 V12 Q7.6 10.8 8.5 10.8 Q9.4 10.8 9.4 12 V13" fill="none" stroke="#fff" stroke-width="0.7"/></svg>
<div class="bx" style="left:404.3px;top:412.16999999999996px;width:960.40px;height:29.71px;background:#fff;border-bottom:1px solid #eaebf2;box-sizing:border-box;"></div>
<div class="bx" style="left:408px;top:423.17px;width:6px;height:6px;border-radius:50%;background:#1a6bb5"></div>
<span id="t96" class="tx" style="left:423.20px;top:421.17px;font-size:8.70px;font-weight:normal;color:#2d2f3a;transform:scaleX(1.0392);">09:00 - 17:00</span>
<span id="t97" class="tx" style="left:502.00px;top:421.17px;font-size:8.70px;font-weight:normal;color:#2d2f3a;transform:scaleX(1.0000);">4</span>
<span id="t98" class="tx" style="left:564.20px;top:421.17px;font-size:8.70px;font-weight:normal;color:#2d2f3a;transform:scaleX(1.0818);">Coolen Olivier</span>
<div class="bx" style="left:794.3px;top:425.56999999999994px;width:4.00px;height:1.20px;background:#a3a3a3;"></div>
<div class="bx" style="left:1024.6px;top:425.56999999999994px;width:4.00px;height:1.20px;background:#a3a3a3;"></div>
<svg class="bx" style="left:1311.4px;top:420.17px" width="11.3" height="11.3" viewBox="0 0 11 11"><rect x="0" y="0" width="11" height="11" rx="1.4" fill="#0c68b6"/><circle cx="5.5" cy="2.9" r="1.1" fill="#fff"/><path d="M4.3 4.6 H6.3 V8.3 H7.2 V9.3 H3.9 V8.3 H4.8 V5.5 H4.3 Z" fill="#fff"/></svg>
<svg class="bx" style="left:1329.5px;top:418.67px" width="12" height="14" viewBox="0 0 12 14"><circle cx="6" cy="3.8" r="3.5" fill="#0c68b6"/><path d="M0.3 13.6 V11.2 Q0.3 8.4 3.4 8.4 H8.6 Q11.7 8.4 11.7 11.2 V13.6 Z" fill="#0c68b6"/><path d="M6 8.4 L4.5 10.6 M6 8.4 L7.5 10.6" stroke="#fff" stroke-width="0.6" fill="none"/><path d="M2.6 13 V12 Q2.6 10.8 3.5 10.8 Q4.4 10.8 4.4 12 V13 M7.6 13 V12 Q7.6 10.8 8.5 10.8 Q9.4 10.8 9.4 12 V13" fill="none" stroke="#fff" stroke-width="0.7"/></svg>
<div class="bx" style="left:404.3px;top:441.88px;width:960.40px;height:29.71px;background:#fff;border-bottom:1px solid #eaebf2;box-sizing:border-box;"></div>
<div class="bx" style="left:408px;top:452.88px;width:6px;height:6px;border-radius:50%;background:#f05a3a"></div>
<span id="t99" class="tx" style="left:423.20px;top:450.88px;font-size:8.70px;font-weight:normal;color:#2d2f3a;transform:scaleX(1.0392);">09:00 - 17:00</span>
<span id="t100" class="tx" style="left:502.00px;top:450.88px;font-size:8.70px;font-weight:normal;color:#2d2f3a;transform:scaleX(1.0000);">1</span>
<span id="t101" class="tx" style="left:564.21px;top:450.88px;font-size:8.70px;font-weight:normal;color:#2d2f3a;transform:scaleX(1.1241);">Monnom David</span>
<div class="bx" style="left:794.3px;top:455.28px;width:4.00px;height:1.20px;background:#333;"></div>
<div class="bx" style="left:1024.6px;top:455.28px;width:4.00px;height:1.20px;background:#333;"></div>
<svg class="bx" style="left:1311.4px;top:449.88px" width="11.3" height="11.3" viewBox="0 0 11 11"><rect x="0" y="0" width="11" height="11" rx="1.4" fill="#0c68b6"/><circle cx="5.5" cy="2.9" r="1.1" fill="#fff"/><path d="M4.3 4.6 H6.3 V8.3 H7.2 V9.3 H3.9 V8.3 H4.8 V5.5 H4.3 Z" fill="#fff"/></svg>
<svg class="bx" style="left:1329.5px;top:448.38px" width="12" height="14" viewBox="0 0 12 14"><circle cx="6" cy="3.8" r="3.5" fill="#0c68b6"/><path d="M0.3 13.6 V11.2 Q0.3 8.4 3.4 8.4 H8.6 Q11.7 8.4 11.7 11.2 V13.6 Z" fill="#0c68b6"/><path d="M6 8.4 L4.5 10.6 M6 8.4 L7.5 10.6" stroke="#fff" stroke-width="0.6" fill="none"/><path d="M2.6 13 V12 Q2.6 10.8 3.5 10.8 Q4.4 10.8 4.4 12 V13 M7.6 13 V12 Q7.6 10.8 8.5 10.8 Q9.4 10.8 9.4 12 V13" fill="none" stroke="#fff" stroke-width="0.7"/></svg>
<div class="bx" style="left:404.3px;top:471.59px;width:960.40px;height:29.71px;background:#fff;border-bottom:1px solid #eaebf2;box-sizing:border-box;"></div>
<div class="bx" style="left:408px;top:482.59px;width:6px;height:6px;border-radius:50%;background:#f05a3a"></div>
<span id="t102" class="tx" style="left:423.20px;top:480.59px;font-size:8.70px;font-weight:normal;color:#2d2f3a;transform:scaleX(1.0392);">09:00 - 17:00</span>
<span id="t103" class="tx" style="left:502.00px;top:480.59px;font-size:8.70px;font-weight:normal;color:#2d2f3a;transform:scaleX(1.0000);">7</span>
<span id="t104" class="tx" style="left:564.20px;top:480.59px;font-size:8.70px;font-weight:normal;color:#2d2f3a;transform:scaleX(1.1018);">Hanin Michael</span>
<div class="bx" style="left:794.3px;top:484.98999999999995px;width:4.00px;height:1.20px;background:#333;"></div>
<div class="bx" style="left:1024.6px;top:484.98999999999995px;width:4.00px;height:1.20px;background:#333;"></div>
<svg class="bx" style="left:1311.4px;top:479.59px" width="11.3" height="11.3" viewBox="0 0 11 11"><rect x="0" y="0" width="11" height="11" rx="1.4" fill="#0c68b6"/><circle cx="5.5" cy="2.9" r="1.1" fill="#fff"/><path d="M4.3 4.6 H6.3 V8.3 H7.2 V9.3 H3.9 V8.3 H4.8 V5.5 H4.3 Z" fill="#fff"/></svg>
<svg class="bx" style="left:1329.5px;top:478.09px" width="12" height="14" viewBox="0 0 12 14"><circle cx="6" cy="3.8" r="3.5" fill="#0c68b6"/><path d="M0.3 13.6 V11.2 Q0.3 8.4 3.4 8.4 H8.6 Q11.7 8.4 11.7 11.2 V13.6 Z" fill="#0c68b6"/><path d="M6 8.4 L4.5 10.6 M6 8.4 L7.5 10.6" stroke="#fff" stroke-width="0.6" fill="none"/><path d="M2.6 13 V12 Q2.6 10.8 3.5 10.8 Q4.4 10.8 4.4 12 V13 M7.6 13 V12 Q7.6 10.8 8.5 10.8 Q9.4 10.8 9.4 12 V13" fill="none" stroke="#fff" stroke-width="0.7"/></svg>
<div class="bx" style="left:404.3px;top:501.3px;width:960.40px;height:29.71px;background:#fff;border-bottom:1px solid #eaebf2;box-sizing:border-box;"></div>
<div class="bx" style="left:408px;top:512.30px;width:6px;height:6px;border-radius:50%;background:#1a6bb5"></div>
<span id="t105" class="tx" style="left:423.20px;top:510.30px;font-size:8.70px;font-weight:normal;color:#2d2f3a;transform:scaleX(1.0392);">09:00 - 20:00</span>
<span id="t106" class="tx" style="left:502.00px;top:510.30px;font-size:8.70px;font-weight:normal;color:#2d2f3a;transform:scaleX(1.0000);">2</span>
<span id="t107" class="tx" style="left:564.20px;top:510.30px;font-size:8.70px;font-weight:normal;color:#2d2f3a;transform:scaleX(1.0915);">Dernier Gabriel</span>
<div class="bx" style="left:794.3px;top:514.6999999999999px;width:4.00px;height:1.20px;background:#a3a3a3;"></div>
<div class="bx" style="left:1024.6px;top:514.6999999999999px;width:4.00px;height:1.20px;background:#a3a3a3;"></div>
<svg class="bx" style="left:1311.4px;top:509.30px" width="11.3" height="11.3" viewBox="0 0 11 11"><rect x="0" y="0" width="11" height="11" rx="1.4" fill="#0c68b6"/><circle cx="5.5" cy="2.9" r="1.1" fill="#fff"/><path d="M4.3 4.6 H6.3 V8.3 H7.2 V9.3 H3.9 V8.3 H4.8 V5.5 H4.3 Z" fill="#fff"/></svg>
<svg class="bx" style="left:1329.5px;top:507.80px" width="12" height="14" viewBox="0 0 12 14"><circle cx="6" cy="3.8" r="3.5" fill="#0c68b6"/><path d="M0.3 13.6 V11.2 Q0.3 8.4 3.4 8.4 H8.6 Q11.7 8.4 11.7 11.2 V13.6 Z" fill="#0c68b6"/><path d="M6 8.4 L4.5 10.6 M6 8.4 L7.5 10.6" stroke="#fff" stroke-width="0.6" fill="none"/><path d="M2.6 13 V12 Q2.6 10.8 3.5 10.8 Q4.4 10.8 4.4 12 V13 M7.6 13 V12 Q7.6 10.8 8.5 10.8 Q9.4 10.8 9.4 12 V13" fill="none" stroke="#fff" stroke-width="0.7"/></svg>
<div class="bx" style="left:404.3px;top:531.01px;width:960.40px;height:29.71px;background:#fff;border-bottom:1px solid #eaebf2;box-sizing:border-box;"></div>
<div class="bx" style="left:408px;top:542.01px;width:6px;height:6px;border-radius:50%;background:#4a4f60"></div>
<span id="t108" class="tx" style="left:423.18px;top:540.01px;font-size:8.70px;font-weight:normal;color:#2d2f3a;transform:scaleX(0.8941);">18:15 - 21:15</span>
<span id="t109" class="tx" style="left:502.00px;top:540.01px;font-size:8.70px;font-weight:normal;color:#2d2f3a;transform:scaleX(1.0000);">18</span>
<span id="t110" class="tx" style="left:564.19px;top:540.01px;font-size:8.70px;font-weight:normal;color:#2d2f3a;transform:scaleX(0.9576);">AOUCHAR ZAID</span>
<span id="t111" class="tx" style="left:794.03px;top:540.01px;font-size:8.70px;font-weight:normal;color:#2d2f3a;transform:scaleX(0.9333);">DERMATOLOGIE</span>
<div class="bx" style="left:1024.6px;top:544.41px;width:4.00px;height:1.20px;background:#a3a3a3;"></div>
<svg class="bx" style="left:1311.4px;top:539.01px" width="11.3" height="11.3" viewBox="0 0 11 11"><rect x="0" y="0" width="11" height="11" rx="1.4" fill="#0c68b6"/><circle cx="5.5" cy="2.9" r="1.1" fill="#fff"/><path d="M4.3 4.6 H6.3 V8.3 H7.2 V9.3 H3.9 V8.3 H4.8 V5.5 H4.3 Z" fill="#fff"/></svg>
<svg class="bx" style="left:1329.5px;top:537.51px" width="12" height="14" viewBox="0 0 12 14"><circle cx="6" cy="3.8" r="3.5" fill="#0c68b6"/><path d="M0.3 13.6 V11.2 Q0.3 8.4 3.4 8.4 H8.6 Q11.7 8.4 11.7 11.2 V13.6 Z" fill="#0c68b6"/><path d="M6 8.4 L4.5 10.6 M6 8.4 L7.5 10.6" stroke="#fff" stroke-width="0.6" fill="none"/><path d="M2.6 13 V12 Q2.6 10.8 3.5 10.8 Q4.4 10.8 4.4 12 V13 M7.6 13 V12 Q7.6 10.8 8.5 10.8 Q9.4 10.8 9.4 12 V13" fill="none" stroke="#fff" stroke-width="0.7"/></svg>
<div class="bx" style="left:404.3px;top:560.72px;width:960.40px;height:29.71px;background:#fff;border-bottom:1px solid #eaebf2;box-sizing:border-box;"></div>
<div class="bx" style="left:408px;top:571.72px;width:6px;height:6px;border-radius:50%;background:#4a4f60"></div>
<span id="t112" class="tx" style="left:423.18px;top:569.72px;font-size:8.70px;font-weight:normal;color:#2d2f3a;transform:scaleX(0.8941);">18:15 - 21:15</span>
<span id="t113" class="tx" style="left:502.00px;top:569.72px;font-size:8.70px;font-weight:normal;color:#2d2f3a;transform:scaleX(1.0000);">9</span>
<span id="t114" class="tx" style="left:564.19px;top:569.72px;font-size:8.70px;font-weight:normal;color:#2d2f3a;transform:scaleX(0.9100);">ADLER MICHAEL</span>
<span id="t115" class="tx" style="left:794.04px;top:569.72px;font-size:8.70px;font-weight:normal;color:#2d2f3a;transform:scaleX(0.9225);">SOMMEIL</span>
<div class="bx" style="left:1024.6px;top:574.12px;width:4.00px;height:1.20px;background:#333;"></div>
<svg class="bx" style="left:1311.4px;top:568.72px" width="11.3" height="11.3" viewBox="0 0 11 11"><rect x="0" y="0" width="11" height="11" rx="1.4" fill="#0c68b6"/><circle cx="5.5" cy="2.9" r="1.1" fill="#fff"/><path d="M4.3 4.6 H6.3 V8.3 H7.2 V9.3 H3.9 V8.3 H4.8 V5.5 H4.3 Z" fill="#fff"/></svg>
<svg class="bx" style="left:1329.5px;top:567.22px" width="12" height="14" viewBox="0 0 12 14"><circle cx="6" cy="3.8" r="3.5" fill="#0c68b6"/><path d="M0.3 13.6 V11.2 Q0.3 8.4 3.4 8.4 H8.6 Q11.7 8.4 11.7 11.2 V13.6 Z" fill="#0c68b6"/><path d="M6 8.4 L4.5 10.6 M6 8.4 L7.5 10.6" stroke="#fff" stroke-width="0.6" fill="none"/><path d="M2.6 13 V12 Q2.6 10.8 3.5 10.8 Q4.4 10.8 4.4 12 V13 M7.6 13 V12 Q7.6 10.8 8.5 10.8 Q9.4 10.8 9.4 12 V13" fill="none" stroke="#fff" stroke-width="0.7"/></svg>
<div class="bx" style="left:404.3px;top:590.4300000000001px;width:960.40px;height:29.71px;background:#fff;border-bottom:1px solid #eaebf2;box-sizing:border-box;"></div>
<div class="bx" style="left:408px;top:601.43px;width:6px;height:6px;border-radius:50%;background:#4a4f60"></div>
<span id="t116" class="tx" style="left:422.36px;top:598.63px;font-size:11.20px;font-weight:normal;color:#2d2f3a;transform:scaleX(0.8169);">19:00 - 22:00</span>
<span id="t117" class="tx" style="left:501.56px;top:598.63px;font-size:11.20px;font-weight:normal;color:#2d2f3a;transform:scaleX(0.4400);">1</span>
<span id="t118" class="tx" style="left:563.34px;top:598.63px;font-size:11.20px;font-weight:normal;color:#2d2f3a;transform:scaleX(0.8409);">Demo User Demo User</span>
<span id="t119" class="tx" style="left:794.15px;top:598.63px;font-size:11.20px;font-weight:normal;color:#2d2f3a;transform:scaleX(0.7047);">CHIRURGIE PLASTIQUE</span>
<span id="t120" class="tx" style="left:1024.62px;top:598.63px;font-size:11.20px;font-weight:normal;color:#2d2f3a;transform:scaleX(0.8839);">Administratif</span>
<svg class="bx" style="left:1311.4px;top:598.43px" width="11.3" height="11.3" viewBox="0 0 11 11"><rect x="0" y="0" width="11" height="11" rx="1.4" fill="#0c68b6"/><circle cx="5.5" cy="2.9" r="1.1" fill="#fff"/><path d="M4.3 4.6 H6.3 V8.3 H7.2 V9.3 H3.9 V8.3 H4.8 V5.5 H4.3 Z" fill="#fff"/></svg>
<svg class="bx" style="left:1329.5px;top:596.93px" width="12" height="14" viewBox="0 0 12 14"><circle cx="6" cy="3.8" r="3.5" fill="#0c68b6"/><path d="M0.3 13.6 V11.2 Q0.3 8.4 3.4 8.4 H8.6 Q11.7 8.4 11.7 11.2 V13.6 Z" fill="#0c68b6"/><path d="M6 8.4 L4.5 10.6 M6 8.4 L7.5 10.6" stroke="#fff" stroke-width="0.6" fill="none"/><path d="M2.6 13 V12 Q2.6 10.8 3.5 10.8 Q4.4 10.8 4.4 12 V13 M7.6 13 V12 Q7.6 10.8 8.5 10.8 Q9.4 10.8 9.4 12 V13" fill="none" stroke="#fff" stroke-width="0.7"/></svg>
<div class="bx" style="left:404.3px;top:620.2px;width:960.40px;height:33.60px;background:#fff;border-top:2px solid #e9ecf1;box-sizing:border-box;"></div>
<div class="bx" style="left:412.2px;top:627px;width:18.40px;height:19.60px;background:#f5f7fa;border-radius:3px;"></div>
<div class="bx" style="left:434.3px;top:627px;width:18.60px;height:19.60px;background:#f5f7fa;border-radius:3px;"></div>
<div class="bx" style="left:480px;top:627px;width:18.60px;height:19.60px;background:#f5f7fa;border-radius:3px;"></div>
<div class="bx" style="left:502.4px;top:627px;width:18.60px;height:19.60px;background:#f5f7fa;border-radius:3px;"></div>
<div class="bx" style="left:457px;top:626.2px;width:18.80px;height:21.40px;background:#3d7cb9;border-radius:3px;"></div>
<span id="t121" class="tx" style="left:416.60px;width:100px;text-align:center;top:632.00px;font-size:8.70px;font-weight:bold;color:#fff;transform:scaleX(1.0000);">1</span>
<svg class="bx" style="left:417px;top:632.5px" width="9" height="10" viewBox="0 0 9 10"><rect x="0.5" y="0.5" width="1.2" height="9.3" fill="#9fc0de"/><path d="M8.3 0.5 V9.7 L2.6 5.1 Z" fill="#3d7cb9"/></svg>
<svg class="bx" style="left:440.5px;top:633.5px" width="6" height="9" viewBox="0 0 6 9"><path d="M5.7 0 V8.5 L0.3 4.25 Z" fill="#3d7cb9"/></svg>
<svg class="bx" style="left:486.7px;top:633.5px" width="6" height="9" viewBox="0 0 6 9"><path d="M0.3 0 V8.5 L5.6 4.25 Z" fill="#3d7cb9"/></svg>
<svg class="bx" style="left:507.5px;top:632.5px" width="9" height="10" viewBox="0 0 9 10"><path d="M0.5 0.5 V9.7 L6.2 5.1 Z" fill="#3d7cb9"/><rect x="6.6" y="0.5" width="1.2" height="9.3" fill="#9fc0de"/></svg>
<span id="t122" class="tx" style="left:1240.80px;top:632.30px;font-size:9.74px;font-weight:normal;color:#555a66;transform:scaleX(0.9214);">Showing 1 to 14 of 14 entries</span>
</body></html>
